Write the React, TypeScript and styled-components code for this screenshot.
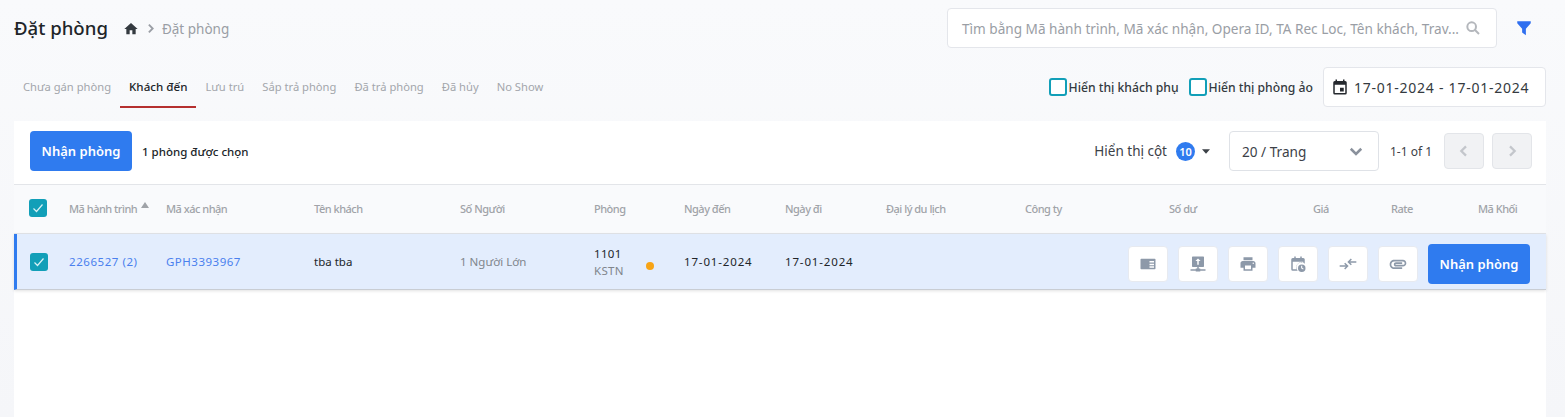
import React from "react";
import styled, { createGlobalStyle } from "styled-components";

const Global = createGlobalStyle`
  html, body { margin: 0; padding: 0; background: #f5f6f9; }
  body { font-family: "Noto Sans", "Liberation Sans", sans-serif; overflow: hidden; }
  * { box-sizing: border-box; }
`;

const Page = styled.div`
  width: 1565px;
  height: 417px;
  padding: 0 19px 0 14px;
  overflow: hidden;
  background: linear-gradient(#f9fafc, #f5f6f9);
`;

const TopBar = styled.header`
  display: flex;
  align-items: center;
  height: 56px;
`;

const Title = styled.h1`
  margin: 0 15px 0 0;
  font-size: 18.6px;
  font-weight: 500;
  color: #212529;
  line-height: 56px;
`;

const Crumbs = styled.nav`
  display: flex;
  align-items: center;
  gap: 5px;
  font-size: 13.5px;
  color: #9a9ea5;
  padding-top: 1px;
`;

const SearchBox = styled.div`
  margin-left: auto;
  width: 550px;
  height: 40px;
  background: #fff;
  border: 1px solid #e4e6eb;
  border-radius: 4px;
  display: flex;
  align-items: center;
  justify-content: space-between;
  padding: 0 15px 0 14px;
  font-size: 13.6px;
  color: #9a9ea5;
  white-space: nowrap;
`;

const FilterButton = styled.div`
  width: 49px;
  display: flex;
  justify-content: center;
  padding-left: 4px;
`;

const TabBar = styled.div`
  display: flex;
  align-items: flex-start;
  height: 65px;
  padding-top: 10px;
`;

const Tabs = styled.div`
  display: flex;
  height: 42px;
`;

const Tab = styled.div<{ $active?: boolean }>`
  padding: 0 9px;
  display: flex;
  align-items: center;
  font-size: ${(p) => (p.$active ? "11.6px" : "11.2px")};
  font-weight: ${(p) => (p.$active ? 500 : 400)};
  color: ${(p) => (p.$active ? "#212529" : "#a3a6ab")};
  border-bottom: 2px solid ${(p) => (p.$active ? "#b5302f" : "transparent")};
`;

const TabControls = styled.div`
  margin: 1px 0 0 auto;
  display: flex;
  align-items: center;
`;

const CheckLabel = styled.label`
  display: flex;
  align-items: center;
  gap: 2px;
  font-size: 12.2px;
  font-weight: 500;
  color: #343a40;
  margin-right: 10px;
`;

const EmptyCheck = styled.span`
  width: 18px;
  height: 18px;
  border: 2px solid #129fb8;
  border-radius: 3px;
  background: #fff;
`;

const DateBox = styled.div`
  width: 223px;
  height: 40px;
  background: #fff;
  border: 1px solid #e4e6eb;
  border-radius: 4px;
  display: flex;
  align-items: center;
  gap: 5px;
  padding-left: 7px;
  font-size: 14px;
  letter-spacing: 0.75px;
  color: #343a40;
`;

const Panel = styled.section`
  background: #fff;
  height: 296px;
`;

const Toolbar = styled.div`
  height: 64px;
  display: flex;
  align-items: center;
  padding: 0 14px 3px 16px;
  border-bottom: 1px solid #e3e5e9;
`;

const PrimaryButton = styled.button`
  height: 40px;
  width: 102px;
  border: 0;
  border-radius: 4px;
  background: #2f7bef;
  color: #fff;
  font-family: inherit;
  font-size: 13px;
  font-weight: 600;
  padding: 0;
`;

const Selected = styled.span`
  margin-left: 10px;
  font-size: 11.5px;
  font-weight: 500;
  color: #212529;
`;

const ColumnToggle = styled.div`
  margin-left: auto;
  display: flex;
  align-items: center;
  font-size: 13.5px;
  color: #3c4147;
`;

const Count = styled.span`
  margin: 0 7px 0 9px;
  width: 19px;
  height: 19px;
  border-radius: 50%;
  background: #2f7bef;
  color: #fff;
  font-size: 11px;
  font-weight: 600;
  display: flex;
  align-items: center;
  justify-content: center;
`;

const PageSize = styled.div`
  margin-left: 19px;
  width: 150px;
  height: 40px;
  border: 1px solid #dfe2e7;
  border-radius: 4px;
  display: flex;
  align-items: center;
  justify-content: space-between;
  padding: 0 13px 0 12px;
  font-size: 13.6px;
  color: #3c4147;
`;

const PageInfo = styled.span`
  margin: 0 11px;
  width: 43px;
  font-size: 12px;
  white-space: nowrap;
  color: #3c4147;
`;

const PageButton = styled.div`
  width: 40px;
  height: 36px;
  border: 1px solid #e3e5e9;
  border-radius: 4px;
  background: #f1f2f4;
  display: flex;
  align-items: center;
  justify-content: center;
  & + & { margin-left: 8px; }
`;

const HeadRow = styled.div`
  display: grid;
  grid-template-columns: 40px 97px 148px 146px 134px 90px 101px 101px 139px 144px 144px 78px 87px 1fr;
  height: 49px;
  align-items: center;
  background: #f9fafc;
  border-bottom: 1px solid #e3e5e9;
  padding: 0 0 2px 15px;
  font-size: 11px;
  letter-spacing: -0.5px;
  color: #a0a3a8;
  font-weight: 500;
`;

const HeadCell = styled.div`
  display: flex;
  align-items: center;
  white-space: nowrap;
`;

const SortMark = styled.span`
  width: 0;
  height: 0;
  margin: -6px 0 0 4px;
  border-left: 4.5px solid transparent;
  border-right: 4.5px solid transparent;
  border-bottom: 6px solid #a0a3a8;
`;

const CheckBox = styled.span`
  width: 18px;
  height: 18px;
  border-radius: 3px;
  background: #129fb8;
  display: flex;
  align-items: center;
  justify-content: center;
`;

const BodyRow = styled.div`
  display: flex;
  align-items: center;
  height: 56px;
  background: #e3edfd;
  border-left: 3px solid #2f7bef;
  border-bottom: 1px solid #c9cdd3;
  box-shadow: 0 1px 3px rgba(0, 0, 0, 0.12);
  padding-left: 13px;
  font-size: 11.5px;
  color: #212529;
`;

const Cell = styled.div<{ $w: number; $muted?: boolean; $link?: boolean; $wide?: number }>`
  width: ${(p) => p.$w}px;
  flex: none;
  letter-spacing: ${(p) => p.$wide ?? 0}px;
  color: ${(p) => (p.$link ? "#4a80ee" : p.$muted ? "#80858c" : "#212529")};
  white-space: nowrap;
`;

const RoomCell = styled.div`
  width: 90px;
  flex: none;
  display: flex;
  align-items: center;
`;

const RoomText = styled.div`
  width: 52px;
  line-height: 17px;
  margin-top: 1px;
  letter-spacing: 0.3px;
`;

const RoomType = styled.div`
  color: #80858c;
`;

const Dot = styled.span`
  width: 8px;
  height: 8px;
  border-radius: 50%;
  background: #f7a416;
  margin-top: 8px;
`;

const Actions = styled.div`
  margin-left: auto;
  padding: 5px 16px 0 0;
  display: flex;
  align-items: center;
  gap: 10px;
`;

const IconButton = styled.div`
  width: 40px;
  height: 36px;
  background: #fff;
  border: 1px solid #e7eaf0;
  border-radius: 4px;
  display: flex;
  align-items: center;
  justify-content: center;
`;

const Ico: React.FC<{ d: string; size?: number; color?: string }> = ({ d, size = 18, color = "#8d99a9" }) => (
  <svg width={size} height={size} viewBox="0 0 24 24" fill={color} aria-hidden="true">
    <path d={d} />
  </svg>
);

const Chevron: React.FC<{ dir: "left" | "right" | "down"; color: string; size?: number }> = ({ dir, color, size = 16 }) => {
  const pts = dir === "left" ? "15,5 8,12 15,19" : dir === "right" ? "9,5 16,12 9,19" : "5,9 12,16 19,9";
  return (
    <svg width={size} height={size} viewBox="0 0 24 24" fill="none" stroke={color} strokeWidth="3.4" aria-hidden="true">
      <polyline points={pts} />
    </svg>
  );
};

const Tick = () => (
  <svg width="12" height="12" viewBox="0 0 24 24" fill="none" stroke="#d9f1f5" strokeWidth="2.4" aria-hidden="true">
    <polyline points="3,13 9,19 21,5" />
  </svg>
);

const CaretDown = () => (
  <svg width="8" height="5" viewBox="0 0 9 5" fill="#3c4147" aria-hidden="true">
    <path d="M0 0h9L4.500 5z" />
  </svg>
);

const ArrowsIn = () => (
  <svg width="20" height="20" viewBox="0 0 24 24" fill="none" stroke="#8d99a9" strokeWidth="1.800" aria-hidden="true">
    <path d="M2 14.500h9M8 11l3.500 3.500L8 18" />
    <path d="M22 9.500h-9M16 6l-3.500 3.500L16 13" />
  </svg>
);

const tabs = ["Chưa gán phòng", "Khách đến", "Lưu trú", "Sắp trả phòng", "Đã trả phòng", "Đã hủy", "No Show"];
const heads = ["Mã xác nhận", "Tên khách", "Số Người", "Phòng", "Ngày đến", "Ngày đi", "Đại lý du lịch", "Công ty", "Số dư", "Giá", "Rate", "Mã Khối"];

const icons = [
  "M3 5h18a1 1 0 0 1 1 1v12a1 1 0 0 1-1 1H3a1 1 0 0 1-1-1V6a1 1 0 0 1 1-1zm11 3v2h6V8h-6zm0 3.500v2h6v-2h-6zm0 3.500v2h6v-2h-6z",
  "M5 2h14a1 1 0 0 1 1 1v12a1 1 0 0 1-1 1h-6v2h2v1h7v2h-7v1H9v-1H2v-2h7v-1h2v-2H5a1 1 0 0 1-1-1V3a1 1 0 0 1 1-1zm7 2.500L8.500 8H11v5h2V8h2.500L12 4.500z",
  "M19 8H5c-1.660 0-3 1.340-3 3v6h4v4h12v-4h4v-6c0-1.660-1.340-3-3-3zm-3 11H8v-5h8v5zm3-7c-.550 0-1-.450-1-1s.450-1 1-1 1 .450 1 1-.450 1-1 1zm-1-9H6v4h12V3z",
  "M7 2h2v2h6V2h2v2h2a2 2 0 0 1 2 2v5.600A6.500 6.500 0 0 0 11.600 21H5a2 2 0 0 1-2-2V6a2 2 0 0 1 2-2h2V2zM5 9v10h5.800A6.500 6.500 0 0 1 19 10.100V9H5zm12 3.500a5 5 0 1 1 0 10 5 5 0 0 1 0-10zm-.800 2v3.300l2.600 1.500.700-1.100-1.900-1.200v-2.500h-1.400z",
];

const clip = "M2 12.500C2 9.460 4.460 7 7.500 7H18c2.210 0 4 1.790 4 4s-1.790 4-4 4H9.500C8.120 15 7 13.880 7 12.500S8.120 10 9.500 10H17v2H9.410c-.550 0-.550 1 0 1H18c1.100 0 2-.900 2-2s-.900-2-2-2H7.500C5.570 9 4 10.570 4 12.500S5.570 16 7.500 16H17v2H7.500C4.460 18 2 15.540 2 12.500z";

export default function App() {
  return (
    <Page>
      <Global />
      <TopBar>
        <Title>Đặt phòng</Title>
        <Crumbs>
          <Ico d="M10 20v-6h4v6h5v-8h3L12 3 2 12h3v8z" size={16} color="#343a40" />
          <Chevron dir="right" color="#9a9ea5" size={13} />
          <span>Đặt phòng</span>
        </Crumbs>
        <SearchBox>
          <span>Tìm bằng Mã hành trình, Mã xác nhận, Opera ID, TA Rec Loc, Tên khách, Trav...</span>
          <svg width="16" height="16" viewBox="0 0 24 24" fill="none" stroke="#b4b7bc" strokeWidth="3" aria-hidden="true">
            <circle cx="10" cy="10" r="6.500" />
            <line x1="15" y1="15" x2="21" y2="21" />
          </svg>
        </SearchBox>
        <FilterButton>
          <Ico d="M3 3h18v2.500L14.500 13v8.500L9.500 18v-5L3 5.500z" size={18} color="#2f6fef" />
        </FilterButton>
      </TopBar>
      <TabBar>
        <Tabs>
          {tabs.map((t, i) => (
            <Tab key={t} $active={i === 1}>{t}</Tab>
          ))}
        </Tabs>
        <TabControls>
          <CheckLabel><EmptyCheck />Hiển thị khách phụ</CheckLabel>
          <CheckLabel><EmptyCheck />Hiển thị phòng ảo</CheckLabel>
          <DateBox>
            <Ico d="M19 4h-1V2h-2v2H8V2H6v2H5a2 2 0 0 0-2 2v14a2 2 0 0 0 2 2h14a2 2 0 0 0 2-2V6a2 2 0 0 0-2-2zm0 16H5V9h14v11zm-7-7h5v5h-5z" size={18} color="#25292e" />
            17-01-2024 - 17-01-2024
          </DateBox>
        </TabControls>
      </TabBar>
      <Panel>
        <Toolbar>
          <PrimaryButton>Nhận phòng</PrimaryButton>
          <Selected>1 phòng được chọn</Selected>
          <ColumnToggle>
            Hiển thị cột
            <Count>10</Count>
            <CaretDown />
          </ColumnToggle>
          <PageSize>
            20 / Trang
            <Chevron dir="down" color="#8a919c" size={18} />
          </PageSize>
          <PageInfo>1-1 of 1</PageInfo>
          <PageButton><Chevron dir="left" color="#c3c6cb" /></PageButton>
          <PageButton><Chevron dir="right" color="#c3c6cb" /></PageButton>
        </Toolbar>
        <HeadRow>
          <HeadCell><CheckBox><Tick /></CheckBox></HeadCell>
          <HeadCell>Mã hành trình<SortMark /></HeadCell>
          {heads.map((h) => (
            <HeadCell key={h}>{h}</HeadCell>
          ))}
        </HeadRow>
        <BodyRow>
          <Cell $w={39}><CheckBox><Tick /></CheckBox></Cell>
          <Cell $w={97} $link $wide={0.55}>2266527 (2)</Cell>
          <Cell $w={148} $link $wide={0.5}>GPH3393967</Cell>
          <Cell $w={146}>tba tba</Cell>
          <Cell $w={134} $muted>1 Người Lớn</Cell>
          <RoomCell>
            <RoomText>1101<RoomType>KSTN</RoomType></RoomText>
            <Dot />
          </RoomCell>
          <Cell $w={101} $wide={0.85}>17-01-2024</Cell>
          <Cell $w={101} $wide={0.85}>17-01-2024</Cell>
          <Actions>
            {icons.map((d) => (
              <IconButton key={d}><Ico d={d} /></IconButton>
            ))}
            <IconButton><ArrowsIn /></IconButton>
            <IconButton><Ico d={clip} size={20} /></IconButton>
            <PrimaryButton>Nhận phòng</PrimaryButton>
          </Actions>
        </BodyRow>
      </Panel>
    </Page>
  );
}
